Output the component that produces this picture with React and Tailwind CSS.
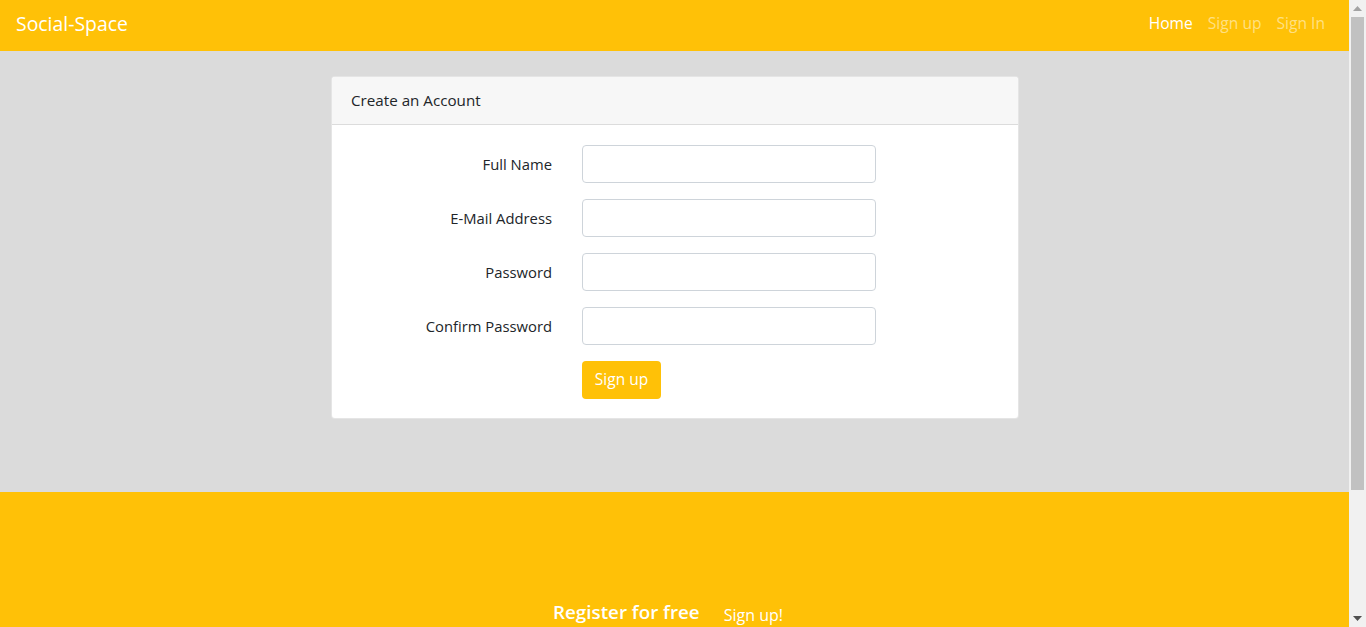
export default function App() {
  const fields = ["Full Name", "E-Mail Address", "Password", "Confirm Password"];
  return (
    <div className="flex h-[627px] w-[1366px] overflow-hidden" style={{ fontFamily: '"Open Sans", "Noto Sans", sans-serif' }}>
      <div className="flex w-[1349px] flex-col">
        <nav className="flex h-[51px] shrink-0 items-center justify-between bg-[#ffc107] pb-[3px] pl-4 pr-6">
          <span className="text-[19.4px] text-white">Social-Space</span>
          <div className="flex items-center gap-[15px] text-[15.6px]">
            <span className="text-white">Home</span>
            <span className="text-[#ffe083]">Sign up</span>
            <span className="text-[#ffe083]">Sign In</span>
          </div>
        </nav>
        <main className="flex h-[441px] shrink-0 bg-[#dbdbdb] pl-[331px] pt-[25px]">
          <div className="h-[343px] w-[688px] overflow-hidden rounded-[4px] border border-black/10 bg-white">
            <div className="flex h-[48px] items-center border-b border-[#dcdcdc] bg-[#f7f7f7] px-[19px] text-[15.2px] text-[#212529]">
              Create an Account
            </div>
            <div className="flex flex-col gap-4 pt-5">
              {fields.map((f) => (
                <div key={f} className="flex items-center">
                  <label className="w-[220px] text-right text-[14.8px] text-[#212529]">{f}</label>
                  <div className="ml-[30px] h-[38px] w-[294px] rounded-[4px] border border-[#ced4da] bg-white" />
                </div>
              ))}
              <div className="flex">
                <button className="ml-[250px] h-[38px] w-[79px] rounded-[4px] bg-[#ffc107] text-[15.5px] text-white">Sign up</button>
              </div>
            </div>
          </div>
        </main>
        <footer className="flex flex-1 items-end justify-center bg-[#ffc107] pb-[1px]">
          <div className="ml-[-13px] flex items-baseline gap-[24px] text-white">
            <span className="text-[18.8px] font-semibold">Register for free</span>
            <span className="relative top-[2px] text-[16px]">Sign up!</span>
          </div>
        </footer>
      </div>
      <div className="flex w-[17px] flex-col bg-[#f1f1f1]">
        <div className="flex h-[17px] items-center justify-center">
          <svg width="9" height="5" viewBox="0 0 9 5"><path d="M0 5 L4.5 0 L9 5 Z" fill="#a3a3a3" /></svg>
        </div>
        <div className="mx-[2px] h-[473px] bg-[#c1c1c1]" />
        <div className="flex-1" />
        <div className="flex h-[17px] items-center justify-center">
          <svg width="9" height="5" viewBox="0 0 9 5"><path d="M0 0 L9 0 L4.5 5 Z" fill="#505050" /></svg>
        </div>
      </div>
    </div>
  );
}
